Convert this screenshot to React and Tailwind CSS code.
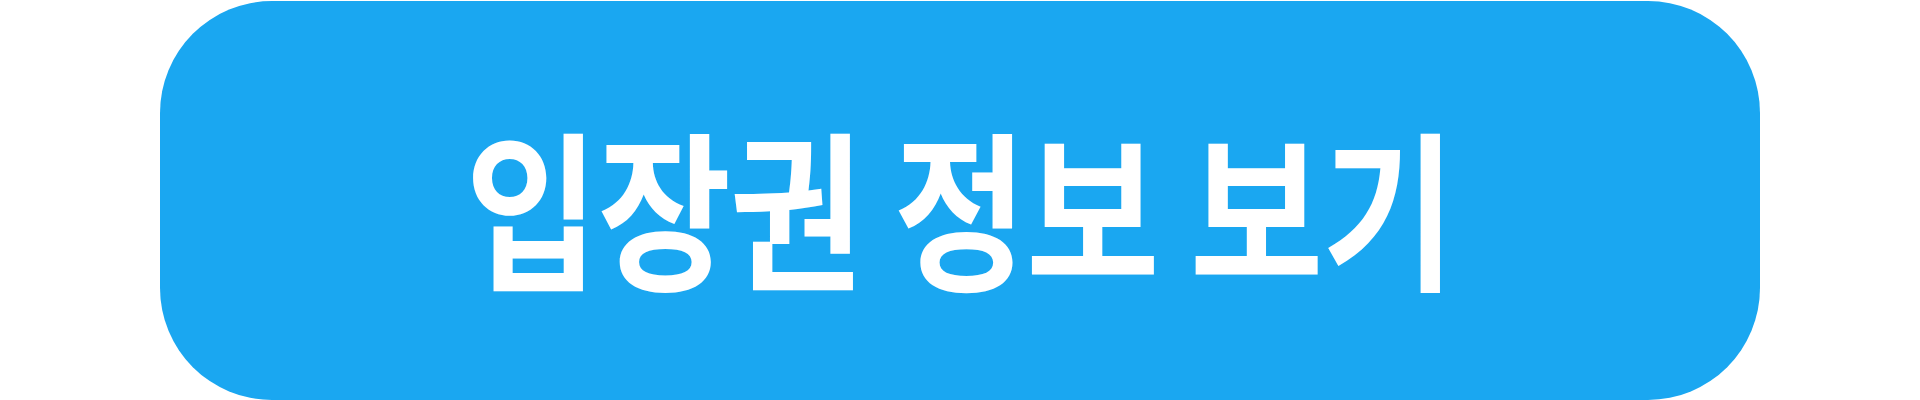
export default function App() {
  return (
    <div className="flex h-[400px] w-full items-start justify-center bg-white pt-px">
      <button
        type="button"
        className="flex h-[399px] w-[1600px] items-center justify-center rounded-[112px] bg-[#1aa7f1] pt-[3px] font-['Noto_Sans_CJK_KR',sans-serif] text-[171px] font-bold leading-none text-white"
      >
        <span className="inline-block scale-x-[0.85] whitespace-nowrap tracking-[-0.01em]">
          입장권 정보 보기
        </span>
      </button>
    </div>
  );
}
